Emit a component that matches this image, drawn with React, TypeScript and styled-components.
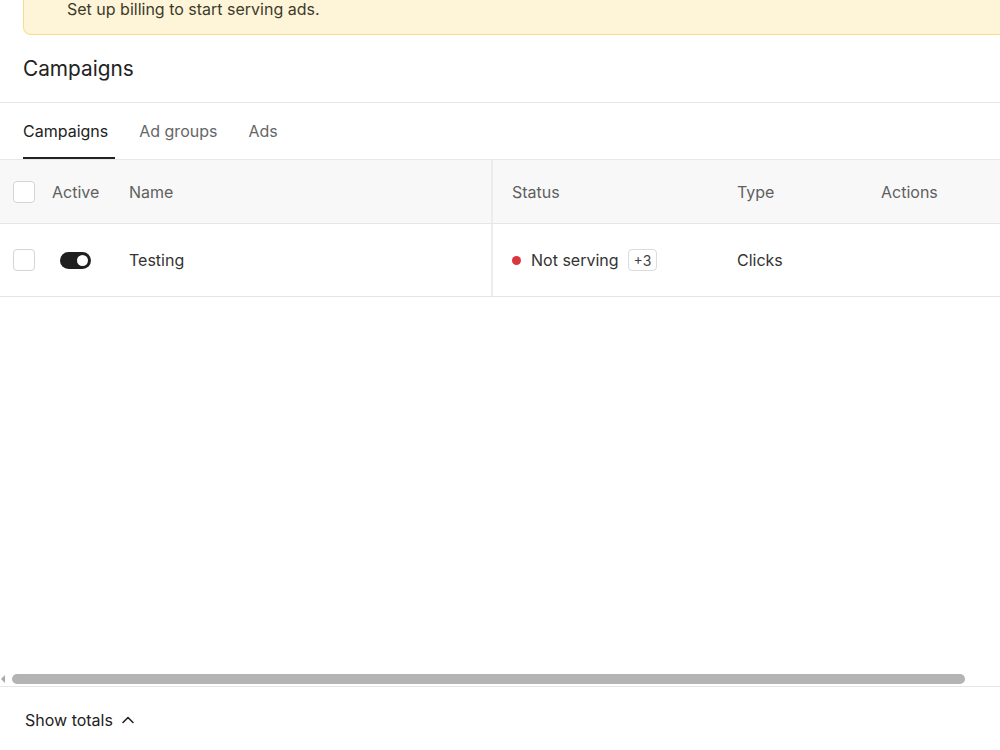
import styled, { createGlobalStyle } from "styled-components"

const Global = createGlobalStyle`
    html, body {
        margin: 0;
        padding: 0;
        background: #fff;
        overflow: hidden;
    }
    body {
        font-family: Inter, "Noto Sans", "Liberation Sans", sans-serif;
        color: #222;
    }
`

const Page = styled.div`
    height: 750px;
    display: flex;
    flex-direction: column;
    overflow: hidden;
`

const Banner = styled.div`
    margin: -19px -20px 0 23px;
    padding: 16px 16px 13px 43px;
    background: #fef5d9;
    border: 1px solid #f7dc8d;
    border-top: none;
    border-radius: 0 0 8px 8px;
    font-size: 16px;
    line-height: 24px;
    color: #3d3a2a;
`

const TitleBar = styled.div`
    padding: 20px 23px 19px;
    border-bottom: 1px solid #e8e8e8;
`

const Title = styled.h1`
    margin: 0;
    font-size: 20.8px;
    font-weight: 400;
    line-height: 28px;
    color: #222;
`

const TabBar = styled.div`
    display: flex;
    gap: 24px;
    padding: 0 23px;
    height: 56px;
    border-bottom: 1px solid #e8e8e8;
`

const Tab = styled.div<{ $active?: boolean }>`
    display: flex;
    align-items: center;
    padding: 2px 7px 0 0;
    font-size: 16px;
    color: ${(p) => (p.$active ? "#222" : "#666")};
    border-bottom: 2px solid ${(p) => (p.$active ? "#222" : "transparent")};
`

const TableArea = styled.div`
    flex: 1;
    display: flex;
    flex-direction: column;
`

const Row = styled.div<{ $head?: boolean }>`
    display: grid;
    grid-template-columns: 44px 77px 372px 244px 144px 1fr;
    height: ${(p) => (p.$head ? "63px" : "72px")};
    background: ${(p) => (p.$head ? "#f8f8f8" : "#fff")};
    border-bottom: 1px solid #e6e6e6;
    font-size: 16px;
    color: ${(p) => (p.$head ? "#5f5f5f" : "#333")};
`

const Cell = styled.div<{ $pad?: number; $split?: boolean }>`
    display: flex;
    align-items: center;
    gap: 10px;
    padding-left: ${(p) => p.$pad ?? 0}px;
    border-right: ${(p) => (p.$split ? "2px solid #ececec" : "none")};
    white-space: nowrap;
`

const Checkbox = styled.span`
    width: 20px;
    height: 20px;
    border: 1px solid #d4d4d4;
    border-radius: 4px;
    background: #fff;
`

const Toggle = styled.span`
    display: flex;
    align-items: center;
    justify-content: flex-end;
    width: 31px;
    height: 17px;
    padding: 0 3px;
    box-sizing: border-box;
    margin-left: 8px;
    border-radius: 9px;
    background: #1f1f1f;

    &::after {
        content: "";
        width: 11px;
        height: 11px;
        border-radius: 50%;
        background: #fff;
    }
`

const Dot = styled.span`
    width: 9px;
    height: 9px;
    border-radius: 50%;
    background: #d9373f;
`

const Badge = styled.span`
    margin-left: -1px;
    padding: 0 5px;
    height: 22px;
    line-height: 21px;
    border: 1px solid #dcdcdc;
    border-radius: 4px;
    font-size: 14px;
    color: #444;
    box-sizing: border-box;
`

const Spacer = styled.div`
    flex: 1;
`

const ScrollTrack = styled.div`
    display: flex;
    align-items: flex-end;
    height: 12px;
    padding-bottom: 2px;
    border-bottom: 1px solid #e6e6e6;
`

const ArrowLeft = styled.span`
    width: 0;
    height: 0;
    margin: 0 0 1px 1px;
    border-top: 4px solid transparent;
    border-bottom: 4px solid transparent;
    border-right: 4px solid #a8a8a8;
`

const Thumb = styled.span`
    margin-left: 7px;
    width: 953px;
    height: 10px;
    border-radius: 5px;
    background: #b4b4b4;
`

const Footer = styled.div`
    height: 63px;
    display: flex;
    align-items: center;
    gap: 8px;
    padding: 2px 0 0 25px;
    box-sizing: border-box;
    font-size: 16px;
    color: #222;
`

const Chevron = () => (
    <svg width="14" height="14" viewBox="0 0 14 14" fill="none">
        <path
            d="M2 9.5 L7 4.5 L12 9.5"
            stroke="#222"
            strokeWidth="1.6"
            strokeLinecap="round"
            strokeLinejoin="round"
        />
    </svg>
)

export default function App() {
    return (
        <Page>
            <Global />
            <Banner>Set up billing to start serving ads.</Banner>
            <TitleBar>
                <Title>Campaigns</Title>
            </TitleBar>
            <TabBar>
                <Tab $active>Campaigns</Tab>
                <Tab>Ad groups</Tab>
                <Tab>Ads</Tab>
            </TabBar>
            <TableArea>
                <Row $head>
                    <Cell $pad={13}>
                        <Checkbox />
                    </Cell>
                    <Cell $pad={8}>Active</Cell>
                    <Cell $pad={8} $split>
                        Name
                    </Cell>
                    <Cell $pad={19}>Status</Cell>
                    <Cell>Type</Cell>
                    <Cell>Actions</Cell>
                </Row>
                <Row>
                    <Cell $pad={13}>
                        <Checkbox />
                    </Cell>
                    <Cell $pad={8}>
                        <Toggle />
                    </Cell>
                    <Cell $pad={8} $split>
                        Testing
                    </Cell>
                    <Cell $pad={19}>
                        <Dot />
                        Not serving
                        <Badge>+3</Badge>
                    </Cell>
                    <Cell>Clicks</Cell>
                    <Cell />
                </Row>
                <Spacer />
                <ScrollTrack>
                    <ArrowLeft />
                    <Thumb />
                </ScrollTrack>
            </TableArea>
            <Footer>
                Show totals
                <Chevron />
            </Footer>
        </Page>
    )
}
